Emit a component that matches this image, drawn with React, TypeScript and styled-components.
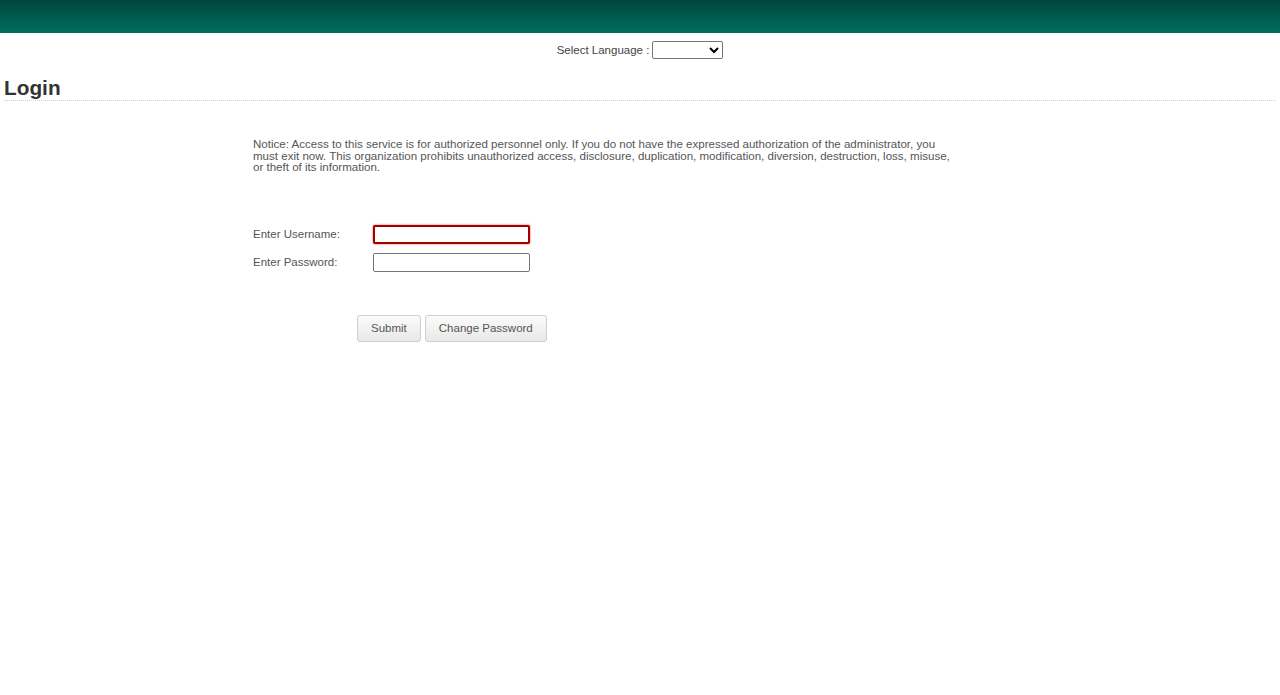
import React from 'react';
import styled, { createGlobalStyle } from 'styled-components';

const GlobalStyle = createGlobalStyle({
  body: {
    margin: 0,
    fontFamily: '"Liberation Sans", Arial, sans-serif',
    background: '#FFFFFF',
  },
});

function App() {
  const [username, setUsername] = React.useState('');
  const [password, setPassword] = React.useState('');

  return (
    <Page>
      <GlobalStyle />
      <TopBar />
      <LanguageRow>
        Select Language :
        <LanguageSelect defaultValue=''>
          <option value=''></option>
          <option value='en'>English</option>
        </LanguageSelect>
      </LanguageRow>
      <Content>
        <Title>Login</Title>
        <Panel>
          <Notice>
            Notice: Access to this service is for authorized personnel only. If you do not have the
            expressed authorization of the administrator, you must exit now. This organization
            prohibits unauthorized access, disclosure, duplication, modification, diversion,
            destruction, loss, misuse, or theft of its information.
          </Notice>
          <Fields>
            <FieldRow>
              <Label>Enter Username:</Label>
              <TextInput
                focused
                value={username}
                onChange={(e) => setUsername(e.target.value)}
              />
            </FieldRow>
            <FieldRow>
              <Label>Enter Password:</Label>
              <TextInput
                type='password'
                value={password}
                onChange={(e) => setPassword(e.target.value)}
              />
            </FieldRow>
          </Fields>
          <Buttons>
            <Button>Submit</Button>
            <Button>Change Password</Button>
          </Buttons>
        </Panel>
      </Content>
    </Page>
  );
}

export default App;

const Page = styled.div({
  minHeight: 695,
});

const TopBar = styled.div({
  height: 33,
  background: 'linear-gradient(to bottom, #00463f 0%, #006d5e 100%)',
});

const LanguageRow = styled.div({
  display: 'flex',
  justifyContent: 'center',
  alignItems: 'center',
  gap: 3,
  marginTop: 8,
  fontSize: 11.5,
  color: '#444',
});

const LanguageSelect = styled.select({
  width: 71,
  height: 18,
  fontSize: 11,
  border: '1px solid #767676',
  borderRadius: 2,
  background: '#FFFFFF',
});

const Content = styled.div({
  padding: '0 4px',
});

const Title = styled.h1({
  margin: '17px 0 0',
  padding: 0,
  fontSize: 20.8,
  fontWeight: 700,
  color: '#333',
  lineHeight: '24px',
  borderBottom: '1px dotted #d0d0d0',
});

const Panel = styled.div({
  marginLeft: 249,
  width: 700,
  paddingTop: 38,
});

const Notice = styled.p({
  margin: 0,
  fontSize: 11.55,
  lineHeight: '11.5px',
  color: '#555',
});

const Fields = styled.div({
  display: 'flex',
  flexDirection: 'column',
  gap: 9,
  marginTop: 51,
});

const FieldRow = styled.div({
  display: 'flex',
  alignItems: 'center',
});

const Label = styled.label({
  width: 120,
  fontSize: 11.5,
  color: '#555',
});

const TextInput = styled.input<{ focused?: boolean }>((p) => ({
  boxSizing: 'border-box',
  width: 157,
  height: 19,
  padding: '1px 2px',
  borderRadius: 2,
  border: p.focused ? '2px solid #a50000' : '1px solid #767676',
  boxShadow: p.focused ? '0 0 2px #e03030' : 'none',
  outline: 'none',
  background: '#FFFFFF',
}));

const Buttons = styled.div({
  display: 'flex',
  gap: 4,
  marginTop: 43,
  marginLeft: 104,
});

const Button = styled.button({
  height: 27,
  padding: '0 13px',
  fontFamily: '"Liberation Sans", Arial, sans-serif',
  fontSize: 11.5,
  color: '#555',
  background: 'linear-gradient(to bottom, #fbfbfb 0%, #e8e8e8 100%)',
  border: '1px solid #cfcfcf',
  borderRadius: 3,
  cursor: 'pointer',

  '&:hover': {
    background: '#e6e6e6',
  },
});
